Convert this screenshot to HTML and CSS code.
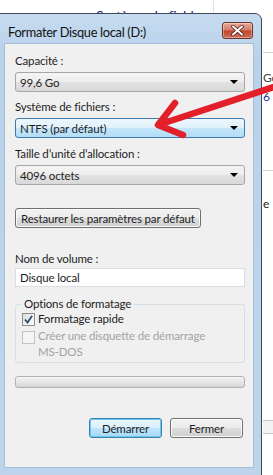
FILE: index.html
```html
<!DOCTYPE html>
<html lang="fr">
<head>
  <meta charset="UTF-8">
  <title>Formater Disque local (D:)</title>
  <link rel="stylesheet" href="styles.css">
</head>
<body>

  <div class="desk">
    <!-- page visible behind the dialog -->
    <div class="behind">
      <div class="behind-top"><span>Système de fichiers</span></div>
      <div class="behind-strip">
        <div class="strip-rule"></div>
        <div class="strip-go">Go</div>
        <div class="strip-s">6 S</div>
        <div class="strip-rule strip-rule-2"></div>
        <div class="strip-e">e</div>
        <div class="strip-band"></div>
      </div>
    </div>

    <div class="window">
      <div class="titlebar">
        <span class="title">Formater Disque local (D:)</span>
        <span class="close">
          <svg width="13" height="11" viewBox="0 0 13 11">
            <path d="M2 1.5 L11 9.5 M11 1.5 L2 9.5" stroke="#4a1e18" stroke-width="3.6" stroke-linecap="round"/>
            <path d="M2 1.5 L11 9.5 M11 1.5 L2 9.5" stroke="#ffffff" stroke-width="2" stroke-linecap="round"/>
          </svg>
        </span>
      </div>

      <div class="client">
        <div class="label first">Capacité :</div>
        <div class="combo"><span>99,6 Go</span><span class="caret"></span></div>

        <div class="label">Système de fichiers :</div>
        <div class="combo hot"><span>NTFS (par défaut)</span><span class="caret"></span></div>

        <div class="label third">Taille d’unité d’allocation :</div>
        <div class="combo"><span>4096 octets</span><span class="caret"></span></div>

        <div class="btn restore">Restaurer les paramètres par défaut</div>

        <div class="label volume">Nom de volume :</div>
        <div class="textbox">Disque local</div>

        <div class="group">
          <span class="legend">Options de formatage</span>
          <div class="check-row">
            <span class="check on">
              <svg width="9" height="9" viewBox="0 0 9 9">
                <path d="M1 4.5 L3.5 7.5 L8 1" fill="none" stroke="#2c4a78" stroke-width="1.8"/>
              </svg>
            </span>
            <span>Formatage rapide</span>
          </div>
          <div class="check-row disabled">
            <span class="check"></span>
            <span>Créer une disquette de démarrage<br>MS-DOS</span>
          </div>
        </div>

        <div class="progress"></div>

        <div class="actions">
          <div class="btn default">Démarrer</div>
          <div class="btn">Fermer</div>
        </div>
      </div>
    </div>

    <svg class="arrow" width="273" height="160" viewBox="0 0 273 160">
      <g fill="none" stroke="#e3202a" stroke-width="6.5" stroke-linecap="round" stroke-linejoin="round">
        <path d="M280 85 L161 124"/>
        <path d="M175 103 L158 125 L183 135"/>
      </g>
    </svg>
  </div>

</body>
</html>
```

FILE: styles.css
```css
body {
  margin: 0;
  padding: 0;
  background-color: #ffffff;
  font-family: Lato, 'Noto Sans', sans-serif;
  font-size: 11.5px;
  letter-spacing: -0.15px;
  color: #1e1e1e;
  overflow: hidden;
}

.desk {
  position: relative;
  width: 273px;
  height: 475px;
  overflow: hidden;
}

/* page behind the dialog */
.behind {
  position: absolute;
  inset: 0;
}

.behind-top {
  position: absolute;
  left: 96px;
  top: 0;
  width: 117px;
  height: 13px;
  overflow: hidden;
  border-right: 1px solid #e2e2e2;
}

.behind-top span {
  display: block;
  margin-top: 9px;
  font-size: 14px;
  line-height: 14px;
  color: #1a2c7a;
  white-space: nowrap;
}

.behind-strip {
  position: absolute;
  left: 263px;
  top: 0;
  width: 20px;
  height: 475px;
  display: flex;
  flex-direction: column;
  color: #444444;
  font-size: 12px;
  line-height: 15px;
}

.strip-rule {
  margin-top: 52px;
  border-top: 1px solid #d0d0d0;
}

.strip-go {
  margin-top: 17px;
}

.strip-s {
  margin-top: 4px;
  color: #26329a;
  letter-spacing: 1px;
}

.strip-rule-2 {
  margin-top: 66px;
}

.strip-e {
  margin-top: 25px;
  color: #222222;
}

.strip-band {
  margin-top: 209px;
  height: 12px;
  border-top: 1px solid #c8c8c8;
  border-bottom: 1px solid #c8c8c8;
  background-color: #f3f3f3;
  flex: none;
}

/* the dialog window */
.window {
  position: absolute;
  left: -4px;
  top: 13px;
  width: 250px;
  height: 470px;
  padding: 0 7px;
  border: 1px solid #3e4a58;
  border-radius: 0 7px 0 0;
  background: linear-gradient(to bottom, #c6dbf0, #b9d2ec 40px, #bdd4ec);
}

.titlebar {
  height: 29px;
  display: flex;
  align-items: center;
  justify-content: space-between;
}

.title {
  font-size: 12.8px;
  letter-spacing: -0.3px;
  color: #111111;
  padding-left: 4px;
  margin-top: 7px;
}

.close {
  width: 29px;
  height: 15px;
  margin-right: 1px;
  margin-top: 4px;
  border: 1px solid #6e342c;
  border-radius: 3px;
  background: linear-gradient(to bottom, #e9a99b, #d57a67 48%, #c0442c 52%, #d0705a);
  display: flex;
  align-items: center;
  justify-content: center;
  box-shadow: inset 0 0 0 1px rgba(255, 255, 255, 0.35);
}

.client {
  height: 423px;
  padding: 0 8px 0 10px;
  background-color: #f0f0f0;
  border: 1px solid #a9bed4;
  display: flex;
  flex-direction: column;
}

.label {
  line-height: 15px;
  margin-top: 7px;
  margin-bottom: 4px;
}

.label.first {
  margin-top: 9px;
}

.label.third {
  margin-top: 8px;
}

.combo {
  height: 18px;
  flex: none;
  border: 1px solid #a6a6a6;
  border-radius: 3px;
  background: linear-gradient(to bottom, #f4f4f4, #ededed 50%, #e2e2e2 51%, #d9d9d9);
  display: flex;
  align-items: center;
  justify-content: space-between;
  padding: 0 6px 0 4px;
}

.combo.hot {
  border-color: #3d7bad;
  background: linear-gradient(to bottom, #edf7fd, #dff1fc 50%, #c4e6fa 51%, #b3ddf6);
}

.caret {
  width: 0;
  height: 0;
  border-left: 4px solid transparent;
  border-right: 4px solid transparent;
  border-top: 4px solid #000000;
}

.btn {
  height: 18px;
  flex: none;
  border: 1px solid #707070;
  border-radius: 3px;
  background: linear-gradient(to bottom, #f2f2f2, #ebebeb 50%, #dddddd 51%, #cfcfcf);
  box-shadow: inset 0 0 0 1px #fbfbfb;
  display: flex;
  align-items: center;
  justify-content: center;
}

.btn.restore {
  align-self: flex-start;
  margin-top: 23px;
  padding: 0 5px;
}

.label.volume {
  margin-top: 23px;
  margin-bottom: 2px;
}

.textbox {
  height: 17px;
  flex: none;
  border: 1px solid #dadde2;
  background-color: #ffffff;
  padding: 0 4px;
  line-height: 17px;
}

.group {
  position: relative;
  box-sizing: border-box;
  margin-top: 17px;
  height: 59px;
  flex: none;
  border: 1px solid #d5dfe5;
  border-radius: 3px;
  padding: 6px 6px 0 6px;
  display: flex;
  flex-direction: column;
  gap: 2px;
}

.legend {
  position: absolute;
  left: 6px;
  top: -9px;
  padding: 0 2px;
  background-color: #f0f0f0;
  line-height: 16px;
}

.check-row {
  display: flex;
  align-items: flex-start;
  gap: 3px;
  line-height: 15px;
}

.check-row.disabled {
  line-height: 16px;
  color: #a3a3a3;
}

.check {
  width: 11px;
  height: 11px;
  margin-top: 2px;
  border: 1px solid #8e8f8f;
  background: linear-gradient(135deg, #dcdcdc, #ffffff);
  display: flex;
  align-items: center;
  justify-content: center;
  flex: none;
}

.check-row.disabled .check {
  margin-top: 3px;
  border-color: #c2c2c2;
  background: #f4f4f4;
}

.progress {
  margin-top: 13px;
  height: 10px;
  flex: none;
  border: 1px solid #b2b2b2;
  border-radius: 3px;
  background: linear-gradient(to bottom, #f3f3f3, #e6e6e6 50%, #d6d6d6);
}

.actions {
  margin-top: 30px;
  display: flex;
  justify-content: flex-end;
  gap: 8px;
  padding-right: 2px;
}

.actions .btn {
  width: 71px;
}

.btn.default {
  border-color: #3c7fb1;
  background: linear-gradient(to bottom, #eaf6fd, #d9f0fc 50%, #bee6fd 51%, #a7d9f5);
  box-shadow: inset 0 0 0 1px #6ec8ec;
}

.arrow {
  position: absolute;
  left: 0;
  top: 0;
}
```
